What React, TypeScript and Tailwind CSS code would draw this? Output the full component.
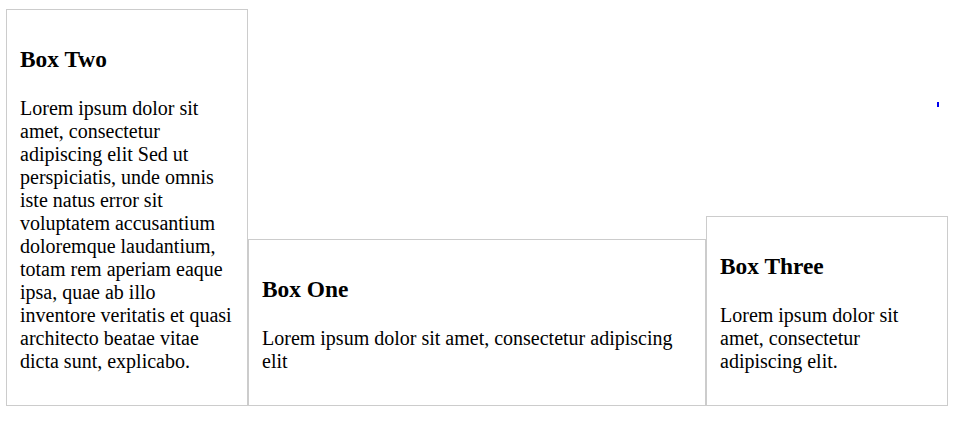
const boxes = [
  {
    title: 'Box Two',
    text: 'Lorem ipsum dolor sit amet, consectetur adipiscing elit Sed ut perspiciatis, unde omnis iste natus error sit voluptatem accusantium doloremque laudantium, totam rem aperiam eaque ipsa, quae ab illo inventore veritatis et quasi architecto beatae vitae dicta sunt, explicabo.',
    grow: 'flex-[1_1_0%]',
  },
  {
    title: 'Box One',
    text: 'Lorem ipsum dolor sit amet, consectetur adipiscing elit',
    grow: 'flex-[2_2_0%]',
  },
  {
    title: 'Box Three',
    text: 'Lorem ipsum dolor sit amet, consectetur adipiscing elit.',
    grow: 'flex-[1_1_0%]',
  },
];

export default function App() {
  return (
    <div className="relative min-h-[423px] bg-white text-black font-['Liberation_Serif',serif] text-[20px]">
      {/* stray blue marker top-right */}
      <span className="absolute left-[937px] top-[102px] w-[2px] h-[5px] bg-[#0000ee]" />

      <div className="flex items-end ml-[6px] pt-[9px] w-[942px]">
        {boxes.map((box) => (
          <div key={box.title} className={`${box.grow} min-w-0 border border-[#cccccc] py-[12px] pl-[13px] pr-[11px]`}>
            <h3 className="text-[23.4px] font-bold mt-[20.4px] mb-0 leading-normal">{box.title}</h3>
            <p className="mt-[19.4px] mb-[20px] leading-[23px]">{box.text}</p>
          </div>
        ))}
      </div>
    </div>
  );
}
